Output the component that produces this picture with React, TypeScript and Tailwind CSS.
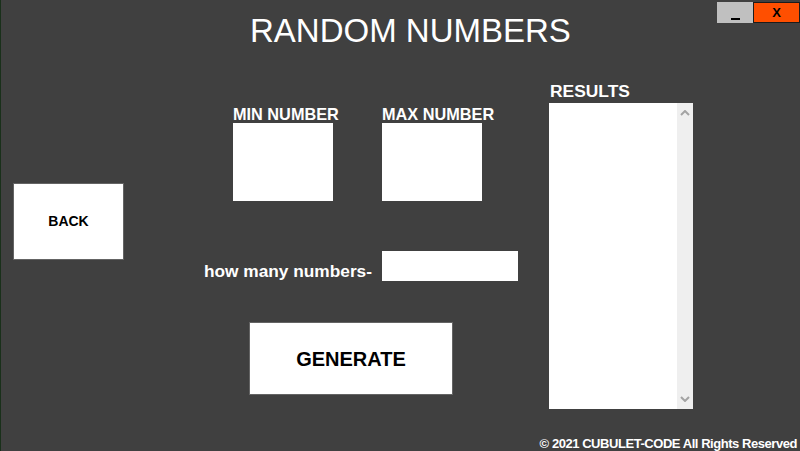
import React from 'react';

const font = { fontFamily: '"Liberation Sans", Arial, sans-serif' };

const Chevron: React.FC<{ down?: boolean }> = ({ down }) => (
  <svg width="10" height="6" viewBox="0 0 10 6" className="text-[#a3a3a3]">
    <polyline
      points={down ? '1,1 5,5 9,1' : '1,5 5,1 9,5'}
      fill="none"
      stroke="currentColor"
      strokeWidth="2"
    />
  </svg>
);

const NumberField: React.FC<{ label: string }> = ({ label }) => (
  <div className="flex flex-col w-[100px]">
    <span className="text-white font-bold text-[16.3px] leading-[18px] whitespace-nowrap">{label}</span>
    <input className="w-[100px] h-[78px] bg-white outline-none" />
  </div>
);

const App: React.FC = () => {
  return (
    <div
      className="w-[800px] h-[451px] bg-[#404040] border-l border-[#19301a] flex flex-col overflow-hidden select-none"
      style={font}
    >
      {/* header: title + window controls */}
      <div className="flex items-start h-[50px]">
        <h1 className="ml-[249px] mt-[12px] text-white text-[33px] leading-[38px] whitespace-nowrap">
          RANDOM NUMBERS
        </h1>
        <div className="ml-auto mt-[2px] flex h-[21px]">
          <button className="w-[36px] h-[21px] bg-[#c0c0c0] flex items-end justify-center pb-[3px]">
            <span className="block w-[9px] h-[2px] bg-black" />
          </button>
          <button className="w-[47px] h-[21px] bg-[#ff4f00] border border-[#1c1c1c] flex items-center justify-center text-black font-bold text-[13px] leading-none">
            X
          </button>
        </div>
      </div>

      {/* body */}
      <div className="flex flex-1">
        {/* back column */}
        <div className="w-[202px] pl-[12px] pt-[133px]">
          <button className="w-[111px] h-[77px] bg-white border border-[#646464] text-black font-bold text-[14px]">
            BACK
          </button>
        </div>

        {/* form column */}
        <div className="w-[346px] flex flex-col">
          <div className="flex gap-[49px] pl-[30px] pt-[55px]">
            <NumberField label="MIN NUMBER" />
            <NumberField label="MAX NUMBER" />
          </div>

          <div className="flex items-end mt-[50px]">
            <span className="w-[169px] text-right text-white font-bold text-[17.3px] leading-[20px] whitespace-nowrap">
              how many numbers-
            </span>
            <input className="ml-[10px] w-[136px] h-[30px] bg-white outline-none" />
          </div>

          <div className="pl-[46px] mt-[41px]">
            <button className="w-[204px] h-[73px] bg-white border border-[#646464] text-black font-bold text-[20px]">
              GENERATE
            </button>
          </div>
        </div>

        {/* results column */}
        <div className="flex flex-col pt-[31px]">
          <span className="pl-[1px] text-white font-bold text-[17.4px] leading-[20px]">RESULTS</span>
          <div className="mt-[2px] w-[144px] h-[306px] bg-white flex">
            <div className="flex-1" />
            <div className="w-[16px] bg-[#efefef] flex flex-col items-center justify-between py-[7px]">
              <Chevron />
              <Chevron down />
            </div>
          </div>
        </div>
      </div>

      {/* footer */}
      <div className="h-[14px] flex justify-end pr-[3px]">
        <span className="text-white font-bold text-[13px] leading-[14px] tracking-[-0.45px] whitespace-nowrap">
          © 2021 CUBULET-CODE All Rights Reserved
        </span>
      </div>
    </div>
  );
};

export default App;
